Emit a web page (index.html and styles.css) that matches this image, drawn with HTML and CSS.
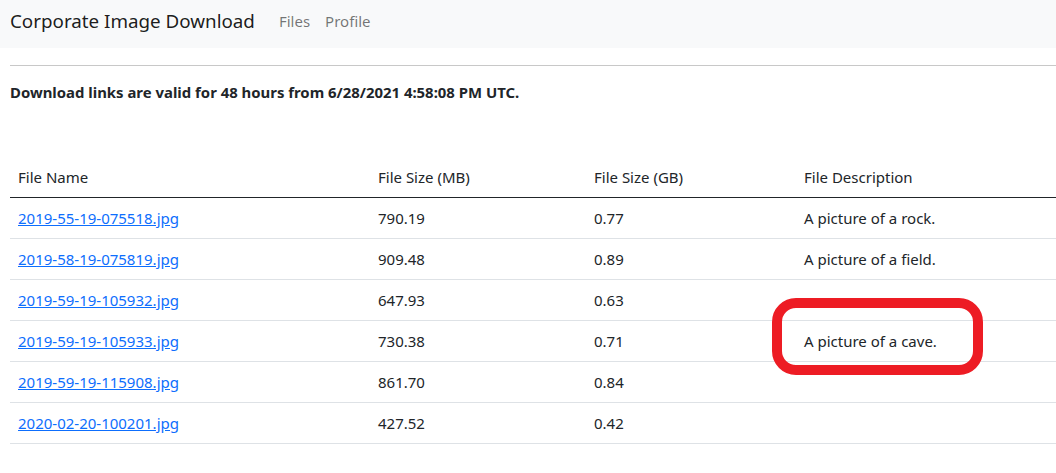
FILE: index.html
```html
<!DOCTYPE html>
<html lang="en">
<head>
<meta charset="utf-8">
<title>Corporate Image Download</title>
<link rel="stylesheet" href="styles.css">
</head>
<body>
<nav class="navbar">
  <span class="brand">Corporate Image Download</span>
  <a class="nav-link" href="#">Files</a>
  <a class="nav-link" href="#">Profile</a>
</nav>
<main class="content">
  <hr class="divider">
  <p class="notice">Download links are valid for 48 hours from 6/28/2021 4:58:08 PM UTC.</p>
  <table class="files">
    <colgroup>
      <col class="col-name">
      <col class="col-mb">
      <col class="col-gb">
      <col class="col-desc">
    </colgroup>
    <thead>
      <tr><th>File Name</th><th>File Size (MB)</th><th>File Size (GB)</th><th>File Description</th></tr>
    </thead>
    <tbody>
      <tr><td><a href="#">2019-55-19-075518.jpg</a></td><td>790.19</td><td>0.77</td><td>A picture of a rock.</td></tr>
      <tr><td><a href="#">2019-58-19-075819.jpg</a></td><td>909.48</td><td>0.89</td><td>A picture of a field.</td></tr>
      <tr><td><a href="#">2019-59-19-105932.jpg</a></td><td>647.93</td><td>0.63</td><td></td></tr>
      <tr><td><a href="#">2019-59-19-105933.jpg</a></td><td>730.38</td><td>0.71</td><td>A picture of a cave.</td></tr>
      <tr><td><a href="#">2019-59-19-115908.jpg</a></td><td>861.70</td><td>0.84</td><td></td></tr>
      <tr><td><a href="#">2020-02-20-100201.jpg</a></td><td>427.52</td><td>0.42</td><td></td></tr>
    </tbody>
  </table>
</main>
<div class="highlight"></div>
</body>
</html>
```
FILE: styles.css
```css
html, body {
  margin: 0;
  padding: 0;
}
body {
  font-family: "Noto Sans", "Open Sans", sans-serif;
  font-size: 15px;
  line-height: 24px;
  color: #212529;
  background: #fff;
  position: relative;
  overflow: hidden;
}
.navbar {
  height: 48px;
  background: #f8f9fa;
  display: flex;
  align-items: center;
  padding: 0 10px;
  box-sizing: border-box;
}
.brand {
  font-size: 18.8px;
  color: rgba(0, 0, 0, 0.9);
  margin-right: 24px;
  position: relative;
  top: -3px;
}
.nav-link {
  font-size: 15px;
  color: rgba(0, 0, 0, 0.55);
  text-decoration: none;
  margin-right: 15px;
  position: relative;
  top: -3px;
}
.content {
  padding: 0 0 0 10px;
}
.divider {
  margin: 17px 0 0 0;
  border: 0;
  border-top: 1px solid #c8c8c8;
  height: 0;
}
.notice {
  margin: 14px 0 53px 0;
  font-weight: 700;
  font-size: 14.9px;
  line-height: 24px;
}
.files {
  width: 100%;
  border-collapse: collapse;
}
.col-name { width: 360px; }
.col-mb { width: 216px; }
.col-gb { width: 210px; }
.files th,
.files td {
  text-align: left;
  font-weight: 400;
  padding: 8px;
  line-height: 24px;
  border-bottom: 1px solid #dee2e6;
}
.files th {
  border-bottom: 1px solid #212529;
}
.files a {
  color: #0d6efd;
  text-decoration: underline;
}
.highlight {
  position: absolute;
  left: 772px;
  top: 298px;
  width: 211px;
  height: 77px;
  box-sizing: border-box;
  border: 10px solid #ed1c24;
  border-radius: 24px;
}
```
